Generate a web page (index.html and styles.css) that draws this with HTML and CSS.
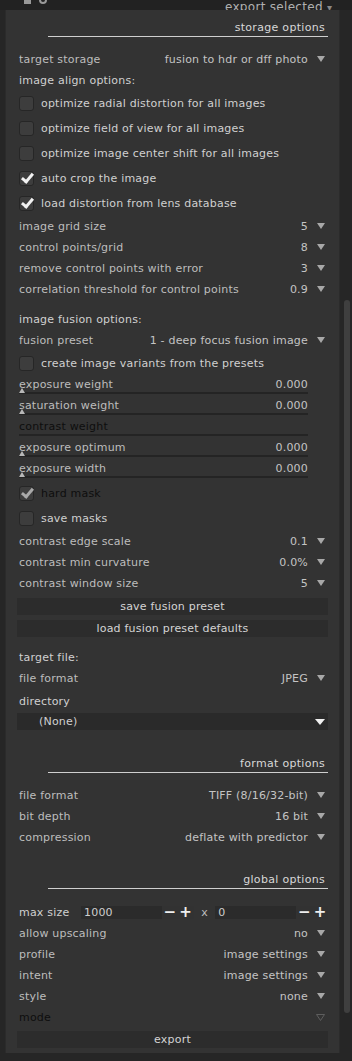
FILE: index.html
```html
<!DOCTYPE html>
<html lang="en">
<head>
  <meta charset="UTF-8">
  <title>export selected</title>
  <link rel="stylesheet" href="styles.css">
</head>
<body>

  <div class="topbar">
    <span class="top-icon top-square"></span>
    <span class="top-icon top-circle"></span>
    <span class="top-title">export selected <span class="top-caret">&#9662;</span></span>
  </div>

  <div class="frame">
    <div class="panel">

      <div class="section-head">storage options</div>

      <div class="row"><span class="label dim">target storage</span><span class="value">fusion to hdr or dff photo</span><span class="arrow"></span></div>
      <div class="row"><span class="label">image align options:</span></div>

      <div class="check-row"><span class="box"></span><span class="label">optimize radial distortion for all images</span></div>
      <div class="check-row"><span class="box"></span><span class="label">optimize field of view for all images</span></div>
      <div class="check-row"><span class="box"></span><span class="label">optimize image center shift for all images</span></div>
      <div class="check-row"><span class="box checked"></span><span class="label">auto crop the image</span></div>
      <div class="check-row"><span class="box checked"></span><span class="label">load distortion from lens database</span></div>

      <div class="row"><span class="label dim">image grid size</span><span class="value">5</span><span class="arrow"></span></div>
      <div class="row"><span class="label dim">control points/grid</span><span class="value">8</span><span class="arrow"></span></div>
      <div class="row"><span class="label dim">remove control points with error</span><span class="value">3</span><span class="arrow"></span></div>
      <div class="row"><span class="label dim">correlation threshold for control points</span><span class="value">0.9</span><span class="arrow"></span></div>

      <div class="row gap-top"><span class="label">image fusion options:</span></div>
      <div class="row"><span class="label dim">fusion preset</span><span class="value">1 - deep focus fusion image</span><span class="arrow"></span></div>

      <div class="check-row"><span class="box"></span><span class="label">create image variants from the presets</span></div>

      <div class="slider"><div class="slider-text"><span class="label dim">exposure weight</span><span class="value">0.000</span></div><div class="slider-bar"><span class="marker"></span></div></div>
      <div class="slider"><div class="slider-text"><span class="label dim">saturation weight</span><span class="value">0.000</span></div><div class="slider-bar"><span class="marker"></span></div></div>
      <div class="slider"><div class="slider-text"><span class="label off">contrast weight</span></div><div class="slider-bar"></div></div>
      <div class="slider"><div class="slider-text"><span class="label dim">exposure optimum</span><span class="value">0.000</span></div><div class="slider-bar"><span class="marker"></span></div></div>
      <div class="slider"><div class="slider-text"><span class="label dim">exposure width</span><span class="value">0.000</span></div><div class="slider-bar"><span class="marker"></span></div></div>

      <div class="check-row"><span class="box checked grey"></span><span class="label off">hard mask</span></div>
      <div class="check-row"><span class="box"></span><span class="label">save masks</span></div>

      <div class="row"><span class="label dim">contrast edge scale</span><span class="value">0.1</span><span class="arrow"></span></div>
      <div class="row"><span class="label dim">contrast min curvature</span><span class="value">0.0%</span><span class="arrow"></span></div>
      <div class="row"><span class="label dim">contrast window size</span><span class="value">5</span><span class="arrow"></span></div>

      <button class="btn first">save fusion preset</button>
      <button class="btn">load fusion preset defaults</button>

      <div class="row gap-top2"><span class="label">target file:</span></div>
      <div class="row"><span class="label dim">file format</span><span class="value">JPEG</span><span class="arrow"></span></div>
      <div class="row tall"><span class="label">directory</span></div>
      <div class="combo"><span class="combo-text">(None)</span><span class="combo-arrow"></span></div>

      <div class="section-head spaced">format options</div>

      <div class="row"><span class="label dim">file format</span><span class="value">TIFF (8/16/32-bit)</span><span class="arrow"></span></div>
      <div class="row"><span class="label dim">bit depth</span><span class="value">16 bit</span><span class="arrow"></span></div>
      <div class="row"><span class="label dim">compression</span><span class="value">deflate with predictor</span><span class="arrow"></span></div>

      <div class="section-head spaced2">global options</div>

      <div class="row size-row">
        <span class="label">max size</span>
        <span class="field">1000</span>
        <span class="step">&minus;</span><span class="step">+</span>
        <span class="times">x</span>
        <span class="field">0</span>
        <span class="step">&minus;</span><span class="step">+</span>
      </div>
      <div class="row"><span class="label dim">allow upscaling</span><span class="value">no</span><span class="arrow"></span></div>
      <div class="row"><span class="label dim">profile</span><span class="value">image settings</span><span class="arrow"></span></div>
      <div class="row"><span class="label dim">intent</span><span class="value">image settings</span><span class="arrow"></span></div>
      <div class="row"><span class="label dim">style</span><span class="value">none</span><span class="arrow"></span></div>
      <div class="row"><span class="label off">mode</span>
        <svg class="hollow" width="9" height="7" viewBox="0 0 9 7"><polygon points="0.5,0.5 8.5,0.5 4.5,6.5" fill="none" stroke="#5e5e5e" stroke-width="1"/></svg>
      </div>

      <button class="btn export">export</button>
    </div>

    <div class="scroll-track"><div class="scroll-thumb"></div></div>
  </div>

</body>
</html>
```

FILE: styles.css
```css
body {
  margin: 0;
  background-color: #262626;
  font-family: "DejaVu Sans", sans-serif;
  font-size: 11px;
  color: #cfcfcf;
  width: 352px;
  height: 1061px;
  overflow: hidden;
}
.topbar {
  height: 10px;
  overflow: hidden;
  display: flex;
  align-items: flex-end;
  position: relative;
  background-color: #222;
}
.top-icon {
  position: absolute;
  bottom: 6px;
  background: #999;
}
.top-square {
  left: 24px;
  width: 7px;
  height: 6px;
}
.top-circle {
  left: 39px;
  width: 8px;
  height: 8px;
  border-radius: 50%;
  background: none;
  border: 2px solid #999;
  box-sizing: border-box;
}
.top-title {
  margin-left: 225px;
  margin-bottom: -5px;
  font-size: 12px;
  color: #b0b0b0;
  letter-spacing: 0.3px;
  line-height: 14px;
}
.top-caret {
  font-size: 10px;
  color: #888;
}
.frame {
  display: flex;
  padding-left: 5px;
}
.panel {
  width: 335px;
  box-sizing: border-box;
  background-color: #333333;
  border-left: 1px solid #2b2b2b;
  border-right: 1px solid #2b2b2b;
  padding: 0 11px 5px 11px;
  height: 1043px;
}
.scroll-track {
  width: 12px;
  padding: 290px 2px 0 4px;
  box-sizing: border-box;
}
.scroll-thumb {
  height: 713px;
  background-color: #3f3f3f;
  border-radius: 3px;
}
.section-head {
  margin: 11px 0 12px 31px;
  padding-right: 3px;
  text-align: right;
  line-height: 14px;
  height: 15px;
  border-bottom: 1px solid #cfcfcf;
  color: #d8d8d8;
  letter-spacing: 0.3px;
}
.section-head.spaced {
  margin-top: 27px;
}
.section-head.spaced2 {
  margin-top: 25px;
}
.row {
  display: flex;
  align-items: center;
  height: 21px;
  padding: 0 3px 0 2px;
  letter-spacing: 0.2px;
}
.row.gap-top {
  margin-top: 9px;
}
.row.gap-top2 {
  margin-top: 10px;
}
.row.tall {
  height: 24px;
}
.label {
  flex: 1;
  white-space: nowrap;
  color: #d0d0d0;
}
.label.dim {
  color: #bdbdbd;
}
.label.off {
  color: #0e0e0e;
}
.value {
  color: #c4c4c4;
  white-space: nowrap;
}
.arrow {
  width: 0;
  height: 0;
  margin-left: 9px;
  border-left: 4px solid transparent;
  border-right: 4px solid transparent;
  border-top: 6px solid #a8a8a8;
  margin-top: -1px;
}
.hollow {
  margin-top: -1px;
}
.check-row {
  display: flex;
  align-items: center;
  height: 25px;
  padding-left: 2px;
  letter-spacing: 0.2px;
}
.box {
  width: 15px;
  height: 15px;
  box-sizing: border-box;
  border: 1px solid #262626;
  background-color: #3d3d3d;
  border-radius: 3px;
  margin-right: 7px;
  position: relative;
}
.box.checked::after {
  content: "";
  position: absolute;
  left: 4px;
  top: -1px;
  width: 4px;
  height: 9px;
  border-right: 3px solid #f2f2f2;
  border-bottom: 3px solid #f2f2f2;
  transform: rotate(40deg);
}
.box.grey::after {
  border-color: #a9a9a9;
}
.slider {
  height: 21px;
  padding: 2px 20px 0 2px;
  box-sizing: border-box;
  letter-spacing: 0.2px;
}
.slider-text {
  display: flex;
  line-height: 14px;
  height: 14px;
}
.slider-bar {
  height: 2px;
  background-color: #242424;
  position: relative;
}
.marker {
  position: absolute;
  left: 0;
  top: -4px;
  width: 0;
  height: 0;
  border-left: 3px solid transparent;
  border-right: 3px solid transparent;
  border-bottom: 5px solid #b8b8b8;
}
.btn {
  display: block;
  width: 100%;
  height: 17px;
  margin-top: 5px;
  padding: 0;
  border: none;
  background-color: #2c2c2c;
  color: #d4d4d4;
  font-family: "DejaVu Sans", sans-serif;
  font-size: 11px;
  letter-spacing: 0.2px;
}
.btn.first {
  margin-top: 4px;
}
.btn.export {
  margin-top: 3px;
}
.combo {
  display: flex;
  align-items: center;
  height: 17px;
  background-color: #2a2a2a;
  padding: 0 3px 0 22px;
  letter-spacing: 0.2px;
}
.combo-text {
  flex: 1;
  color: #d0d0d0;
}
.combo-arrow {
  width: 0;
  height: 0;
  border-left: 5px solid transparent;
  border-right: 5px solid transparent;
  border-top: 6px solid #f0f0f0;
}
.size-row {
  height: 22px;
  margin-top: 1px;
  padding-right: 0;
}
.size-row .label {
  flex: none;
  width: 62px;
}
.field {
  width: 79px;
  height: 13px;
  line-height: 13px;
  padding-left: 3px;
  background-color: #2b2b2b;
  color: #cfcfcf;
}
.step {
  width: 16px;
  height: 13px;
  line-height: 12px;
  text-align: center;
  font-size: 15px;
  font-weight: bold;
  color: #eeeeee;
  background-color: #323232;
}
.times {
  width: 22px;
  text-align: center;
  color: #bbb;
}
```
